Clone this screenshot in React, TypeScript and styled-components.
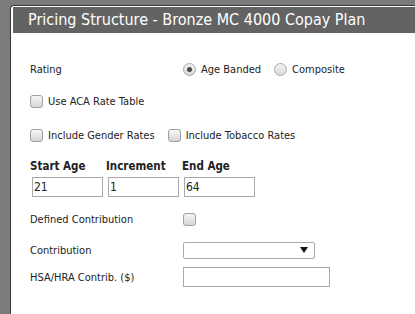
import styled, { createGlobalStyle } from 'styled-components';

const GlobalStyle = createGlobalStyle`
  html, body {
    margin: 0;
    padding: 0;
    background: #7b7b7b;
    font-family: 'DejaVu Sans Condensed', 'DejaVu Sans', sans-serif;
  }
`;

const AGE_FIELDS = [
  { label: 'Start Age', value: '21', width: 71 },
  { label: 'Increment', value: '1', width: 71 },
  { label: 'End Age', value: '64', width: 71 },
];

function App() {
  return (
    <>
      <GlobalStyle />
      <StyledPage>
        <StyledPanel>
          <StyledHeader>Pricing Structure - Bronze MC 4000 Copay Plan</StyledHeader>
          <StyledForm>
            <StyledRow height={33}>
              <StyledLabel>Rating</StyledLabel>
              <StyledOption>
                <StyledRadio checked />
                Age Banded
              </StyledOption>
              <StyledOption>
                <StyledRadio />
                Composite
              </StyledOption>
            </StyledRow>

            <StyledRow height={31}>
              <StyledOption>
                <StyledCheck />
                Use ACA Rate Table
              </StyledOption>
            </StyledRow>

            <StyledRow height={36}>
              <StyledOption>
                <StyledCheck />
                Include Gender Rates
              </StyledOption>
              <StyledOption>
                <StyledCheck />
                Include Tobacco Rates
              </StyledOption>
            </StyledRow>

            <StyledAgeGrid>
              {AGE_FIELDS.map((field) => (
                <StyledAgeField key={field.label}>
                  <StyledBoldLabel>{field.label}</StyledBoldLabel>
                  <StyledInput width={field.width} value={field.value} readOnly />
                </StyledAgeField>
              ))}
            </StyledAgeGrid>

            <StyledRow height={32}>
              <StyledLabel>Defined Contribution</StyledLabel>
              <StyledCheck />
            </StyledRow>

            <StyledRow height={30}>
              <StyledLabel>Contribution</StyledLabel>
              <StyledSelect>
                <StyledArrow />
              </StyledSelect>
            </StyledRow>

            <StyledRow height={24}>
              <StyledLabel>HSA/HRA Contrib. ($)</StyledLabel>
              <StyledInput width={147} height={20} readOnly />
            </StyledRow>
          </StyledForm>
        </StyledPanel>
      </StyledPage>
    </>
  );
}

const StyledPage = styled.div`
  display: flex;
  padding: 5px 0 0 10px;
  height: 314px;
  box-sizing: border-box;
`;

const StyledPanel = styled.div`
  flex: 1;
  background: #fff;
  border-left: 1px solid #3a3a3a;
  border-top: 1px solid #3a3a3a;
  border-top-left-radius: 4px;
  padding: 1px 0 0 2px;
`;

const StyledHeader = styled.div`
  height: 26px;
  line-height: 26px;
  background: #636363;
  color: #fff;
  font-size: 16px;
  padding-left: 15px;
  white-space: nowrap;
  overflow: hidden;
`;

const StyledForm = styled.div`
  display: flex;
  flex-direction: column;
  padding: 20px 0 0 17px;
  font-size: 11px;
  color: #222;
`;

const StyledRow = styled.div<{ height: number }>`
  display: flex;
  align-items: center;
  height: ${(p) => p.height}px;
`;

const StyledLabel = styled.span`
  width: 153px;
  flex-shrink: 0;
`;

const StyledOption = styled.label`
  display: flex;
  align-items: center;
  gap: 5px;
  margin-right: 13px;
  white-space: nowrap;
`;

const StyledRadio = styled.span<{ checked?: boolean }>`
  position: relative;
  width: 11px;
  height: 11px;
  border-radius: 50%;
  border: 1px solid #a8a8a8;
  background: linear-gradient(#f4f4f4, #d8d8d8);
  &::after {
    content: '';
    display: ${(p) => (p.checked ? 'block' : 'none')};
    position: absolute;
    left: 3px;
    top: 3px;
    width: 5px;
    height: 5px;
    border-radius: 50%;
    background: #4a4a4a;
  }
`;

const StyledCheck = styled.span`
  width: 11px;
  height: 11px;
  border-radius: 3px;
  border: 1px solid #a0a0a0;
  background: linear-gradient(#f6f6f6, #d6d6d6);
`;

const StyledAgeGrid = styled.div`
  display: flex;
  gap: 5px;
  padding: 6px 0 6px 2px;
`;

const StyledAgeField = styled.div`
  display: flex;
  flex-direction: column;
`;

const StyledBoldLabel = styled.span`
  font-weight: bold;
  font-size: 11.5px;
  margin: 0 0 4px -2px;
`;

const StyledInput = styled.input<{ width: number; height?: number }>`
  width: ${(p) => p.width}px;
  height: ${(p) => p.height ?? 20}px;
  box-sizing: border-box;
  border: 1px solid #a9a9a9;
  padding: 0 1px;
  font: 12px 'DejaVu Sans Condensed', 'DejaVu Sans', sans-serif;
  color: #222;
  outline: none;
`;

const StyledSelect = styled.div`
  width: 132px;
  height: 17px;
  box-sizing: border-box;
  border: 1px solid #a9a9a9;
  border-radius: 2px;
  display: flex;
  align-items: center;
  justify-content: flex-end;
  padding-right: 6px;
`;

const StyledArrow = styled.span`
  width: 0;
  height: 0;
  border-left: 4px solid transparent;
  border-right: 4px solid transparent;
  border-top: 6px solid #111;
`;

export default App;
